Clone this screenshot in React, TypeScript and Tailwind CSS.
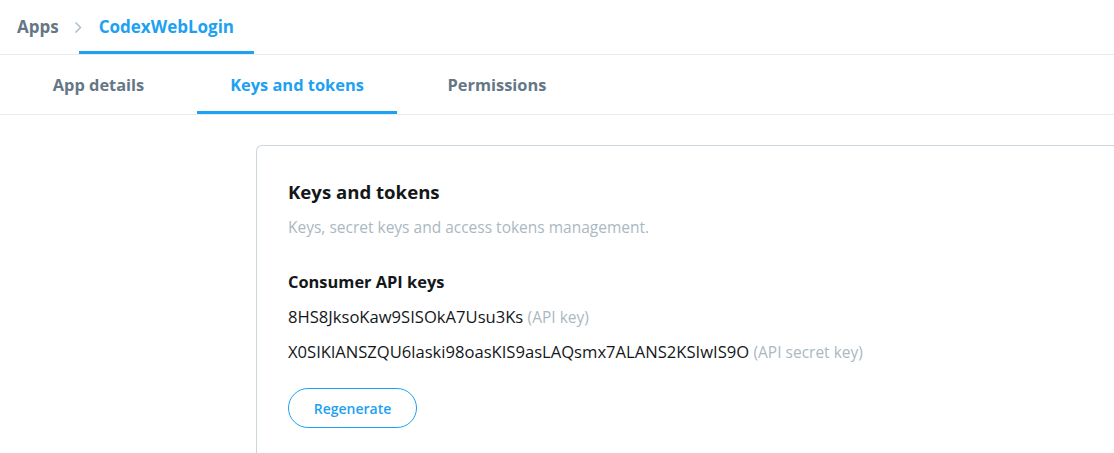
import React from 'react';

const tabs = ['App details', 'Keys and tokens', 'Permissions'];

export default function App() {
  return (
    <div className="min-h-[453px] w-full overflow-hidden bg-white font-['Open_Sans','Noto_Sans',sans-serif]">
      {/* breadcrumb */}
      <div className="flex h-[55px] items-stretch border-b border-[#e6ecf0]">
        <div className="flex items-center pl-[17px] text-[17px] font-bold text-[#657786]">Apps</div>
        <div className="flex items-center pl-[15px]">
          <svg width="8" height="13" viewBox="0 0 8 13">
            <path d="M1.5 1.5 L6.5 6.5 L1.5 11.5" fill="none" stroke="#aab8c2" strokeWidth="1.4" />
          </svg>
        </div>
        <div className="ml-[-3px] flex items-center border-b-[3px] border-[#1da1f2] px-[20px] pt-[3px]">
          <span className="text-[17px] font-bold text-[#1da1f2]">CodexWebLogin</span>
        </div>
      </div>

      {/* tabs */}
      <div className="flex h-[60px] border-b border-[#e6ecf0]">
        {tabs.map((t, i) => (
          <div
            key={t}
            className={
              i === 1
                ? 'flex w-[200px] items-center justify-center border-b-[3px] border-[#1da1f2] pt-[5px] text-[16.4px] font-bold text-[#1da1f2]'
                : 'flex items-center justify-center pt-[2px] text-[16.4px] font-bold text-[#657786] ' + (i === 0 ? 'w-[197px]' : 'w-[200px]')
            }
          >
            {t}
          </div>
        ))}
      </div>

      {/* content */}
      <div className="flex pt-[30px] pl-[256px]">
        <div className="w-[900px] shrink-0 rounded-tl-[6px] border-t border-l border-[#ccd6dd] px-[31px] pt-[33px] pb-[30px]">
          <h2 className="text-[18.6px] font-bold leading-[26px] text-[#14171a]">Keys and tokens</h2>
          <p className="mt-[12px] text-[15.5px] leading-[20px] text-[#aab8c2]">
            Keys, secret keys and access tokens management.
          </p>
          <h3 className="mt-[33px] text-[16.4px] font-bold leading-[24px] text-[#14171a]">Consumer API keys</h3>
          <p className="mt-[11px] text-[16.6px] leading-[24px] text-[#14171a]">
            8HS8JksoKaw9SISOkA7Usu3Ks <span className="text-[15.5px] text-[#aab8c2]">(API key)</span>
          </p>
          <p className="mt-[11px] text-[16.6px] leading-[24px] text-[#14171a]">
            X0SIKlANSZQU6laski98oasKIS9asLAQsmx7ALANS2KSIwIS9O{' '}
            <span className="text-[15.5px] text-[#aab8c2]">(API secret key)</span>
          </p>
          <button className="mt-[24px] h-[40px] w-[129px] rounded-full border border-[#1da1f2] text-[14px] font-semibold text-[#1da1f2]">
            Regenerate
          </button>
        </div>
      </div>
    </div>
  );
}
